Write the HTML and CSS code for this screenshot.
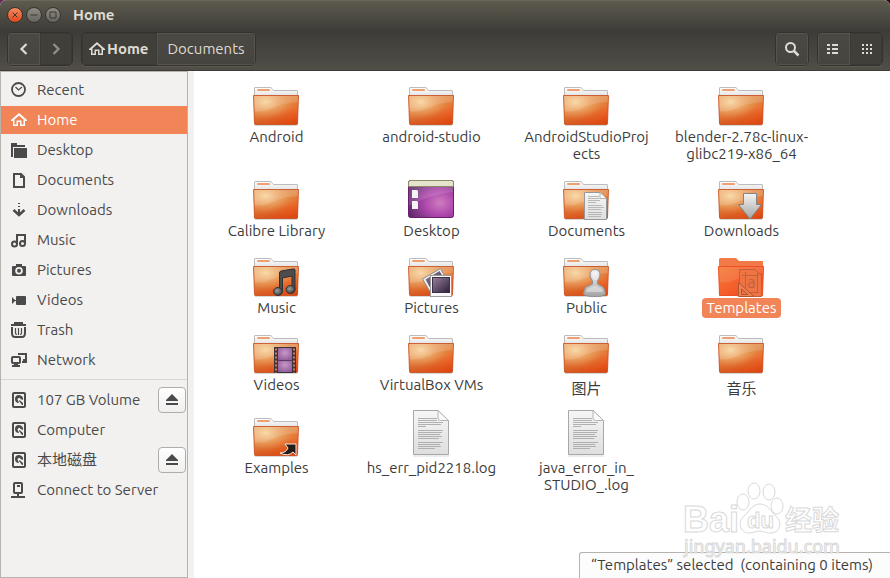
FILE: index.html
```html
<!DOCTYPE html>
<html lang="en">
<head>
    <meta charset="UTF-8">
    <meta name="viewport" content="width=device-width, initial-scale=1.0">
    <title>Home</title>
    <link rel="stylesheet" href="styles.css">
</head>
<body>
    <!-- shared gradients and icons -->
    <svg class="defs" width="0" height="0" aria-hidden="true">
        <defs>
            <linearGradient id="folder-base" x1="0" y1="0" x2="1" y2="1">
                <stop offset="0" stop-color="#e8a468"/>
                <stop offset="0.5" stop-color="#e28a46"/>
                <stop offset="0.85" stop-color="#f05a20"/>
                <stop offset="1" stop-color="#e04c1a"/>
            </linearGradient>
            <radialGradient id="folder-glow" cx="0.27" cy="0.22" r="0.6">
                <stop offset="0" stop-color="#f8d8a0" stop-opacity="0.95"/>
                <stop offset="1" stop-color="#f0a060" stop-opacity="0"/>
            </radialGradient>
            <linearGradient id="folder-shade" x1="0" y1="0" x2="0" y2="1">
                <stop offset="0.4" stop-color="#d84c14" stop-opacity="0"/>
                <stop offset="1" stop-color="#d4440e" stop-opacity="0.7"/>
            </linearGradient>
            <linearGradient id="tab" x1="0" y1="0" x2="0" y2="1">
                <stop offset="0" stop-color="#ffffff"/>
                <stop offset="1" stop-color="#dcdcdc"/>
            </linearGradient>
            <linearGradient id="paper" x1="0" y1="0" x2="0" y2="1">
                <stop offset="0" stop-color="#f6f6f6"/>
                <stop offset="1" stop-color="#dedede"/>
            </linearGradient>
            <linearGradient id="metal" x1="0" y1="0" x2="0" y2="1">
                <stop offset="0" stop-color="#f4f4f4"/>
                <stop offset="1" stop-color="#a4a4a4"/>
            </linearGradient>
            <radialGradient id="purple" cx="0.7" cy="0.6" r="0.75">
                <stop offset="0" stop-color="#d07cc0"/>
                <stop offset="0.45" stop-color="#ae48ac"/>
                <stop offset="1" stop-color="#5c2868"/>
            </radialGradient>
            <linearGradient id="photo" x1="0" y1="0" x2="1" y2="1">
                <stop offset="0" stop-color="#9a809c"/>
                <stop offset="1" stop-color="#2c2038"/>
            </linearGradient>
            <radialGradient id="film" cx="0.5" cy="0.4" r="0.8">
                <stop offset="0" stop-color="#c898c8"/>
                <stop offset="1" stop-color="#845090"/>
            </radialGradient>
            <radialGradient id="note" cx="0.4" cy="0.4" r="0.6">
                <stop offset="0" stop-color="#a0a0a0"/>
                <stop offset="1" stop-color="#3c3c3c"/>
            </radialGradient>
            <linearGradient id="selected" x1="0" y1="0" x2="1" y2="1">
                <stop offset="0" stop-color="#f47a38"/>
                <stop offset="0.5" stop-color="#f4602c"/>
                <stop offset="1" stop-color="#f03c14"/>
            </linearGradient>
        </defs>

        <symbol id="folder" viewBox="0 0 49 48">
            <path d="M3 47.500H45" stroke="#000" stroke-opacity="0.15"/>
            <path d="M2.500 20V10Q2.500 9.500 3 9.500H18Q19 9.500 20 10.500L21.500 12.500H45Q45.500 12.500 45.500 13V20Z" fill="url(#tab)" stroke="#bcbcbc"/>
            <rect x="5" y="11" width="13" height="2" rx="1" fill="#f0a070"/>
            <path d="M1.500 17.500H46.500L45.500 45.500Q45.500 46.500 44.500 46.500H3.500Q2.500 46.500 2.500 45.500Z" fill="url(#folder-base)"/>
            <path d="M1.500 17.500H46.500L45.500 46.500H2.500Z" fill="url(#folder-shade)"/>
            <path d="M1.500 17.500H46.500L45.500 46.500H2.500Z" fill="url(#folder-glow)"/>
            <path d="M2 18H46V24Q30 25 20 30T2.500 33Z" fill="#fff" fill-opacity="0.14"/>
            <path d="M1.500 17.500H46.500L45.500 45.500Q45.500 46.500 44.500 46.500H3.500Q2.500 46.500 2.500 45.500Z" fill="none" stroke="#c44a1c" stroke-opacity="0.8"/>
        </symbol>
        <symbol id="text-file" viewBox="0 0 49 48">
            <path d="M6 47H42" stroke="#000" stroke-opacity="0.15"/>
            <path d="M6.500 1.500H31L41.500 11.500V45.500H6.500Z" fill="url(#paper)" stroke="#a8a8a8"/>
            <path d="M31 1.500V9Q31 11.500 33.500 11.500H41.500Z" fill="#fafafa" stroke="#b4b4b4"/>
            <path d="M11 9.500H30M11 11.500H30M11 13.500H36M11 15.500H34M11 17.500H19M11 21.500H36M11 23.500H35M11 25.500H33M11 27.500H35M11 29.500H32M11 33.500H36M11 35.500H33M11 37.500H34M11 39.500H28" stroke="#b0b0b0"/>
        </symbol>
        <symbol id="house" viewBox="0 0 16 16">
            <path d="M8 1L0 8V9H2V14H7V10H9V14H14V9H16V8ZM8 3.500L12.500 7.500V12.500H10.500V8.500H5.500V12.500H3.500V7.500Z" fill="currentColor" fill-rule="evenodd"/>
        </symbol>
        <symbol id="disk" viewBox="0 0 16 16">
            <rect x="2" y="1" width="12" height="14" rx="1" fill="none" stroke="currentColor" stroke-width="2"/>
            <path d="M8 3A4 4 0 1 0 8 11L7 8.500A1.500 1.500 0 1 1 9.500 7L12 8A4 4 0 0 0 8 3ZM8.500 8L12 11V13H11L8 9Z" fill="currentColor"/>
        </symbol>
        <symbol id="eject" viewBox="0 0 12 12">
            <path d="M6 0L12 6V7H0V6ZM0 9H12V11H0Z" fill="currentColor"/>
        </symbol>
    </svg>

    <div class="window">
        <header class="header">
            <div class="titlebar">
                <button class="control close" aria-label="Close"><svg viewBox="0 0 14 14"><path d="M4.500 4.500L9.500 9.500M9.500 4.500L4.500 9.500"/></svg></button>
                <button class="control" aria-label="Minimize"><svg viewBox="0 0 14 14"><path d="M3.500 7H10.500"/></svg></button>
                <button class="control" aria-label="Maximize"><svg viewBox="0 0 14 14"><path d="M4 4H10V10H4Z"/></svg></button>
                <h1 class="title">Home</h1>
            </div>
            <div class="toolbar">
                <div class="group">
                    <button class="tool" aria-label="Back"><svg class="icon" viewBox="0 0 16 16"><path d="M10.500 3L5.500 8L10.500 13" fill="none" stroke="currentColor" stroke-width="2.200"/></svg></button>
                    <button class="tool pressed dim" aria-label="Forward"><svg class="icon" viewBox="0 0 16 16"><path d="M5.500 3L10.500 8L5.500 13" fill="none" stroke="currentColor" stroke-width="2.200"/></svg></button>
                </div>
                <nav class="group path">
                    <button class="tool pressed current"><svg class="icon"><use href="#house"/></svg>Home</button>
                    <button class="tool">Documents</button>
                </nav>
                <div class="group search">
                    <button class="tool" aria-label="Search"><svg class="icon" viewBox="0 0 16 16"><circle cx="6.500" cy="6.500" r="4.500" fill="none" stroke="currentColor" stroke-width="2"/><path d="M10 10L14.500 14.500" stroke="currentColor" stroke-width="2.500"/></svg></button>
                </div>
                <div class="group">
                    <button class="tool" aria-label="List view"><svg class="icon" viewBox="0 0 16 16"><path d="M1 3H4V5H1ZM6 3H12V5H6ZM1 7H4V9H1ZM6 7H12V9H6ZM1 11H4V13H1ZM6 11H12V13H6Z" fill="currentColor"/></svg></button>
                    <button class="tool pressed" aria-label="Icon view"><svg class="icon" viewBox="0 0 16 16"><path d="M4 3H6V5H4ZM8 3H10V5H8ZM12 3H14V5H12ZM4 7H6V9H4ZM8 7H10V9H8ZM12 7H14V9H12ZM4 11H6V13H4ZM8 11H10V13H8ZM12 11H14V13H12Z" fill="currentColor"/></svg></button>
                </div>
            </div>
        </header>

        <div class="body">
            <nav class="sidebar">
                <ul class="places">
                    <li><a class="place" href="#recent"><svg class="icon" viewBox="0 0 16 16"><circle cx="7.500" cy="7.500" r="6.500" fill="none" stroke="currentColor" stroke-width="1.800"/><path d="M4.500 5L7.500 8L11 5" fill="none" stroke="currentColor" stroke-width="1.200"/></svg>Recent</a></li>
                    <li><a class="place active" href="#home"><svg class="icon"><use href="#house"/></svg>Home</a></li>
                    <li><a class="place" href="#desktop"><svg class="icon" viewBox="0 0 16 16"><path d="M0 1H6V3H14V5H2V15H0ZM3 6H16V16H3Z" fill="currentColor"/></svg>Desktop</a></li>
                    <li><a class="place" href="#documents"><svg class="icon" viewBox="0 0 16 16"><path d="M3 2H10L13 5V15H3Z" fill="none" stroke="currentColor" stroke-width="2"/><path d="M9 2V6H13Z" fill="currentColor"/></svg>Documents</a></li>
                    <li><a class="place" href="#downloads"><svg class="icon" viewBox="0 0 16 16"><path d="M7 1H9V2H7ZM7 4H9V5H7ZM7 7H9V11H7Z" fill="currentColor"/><path d="M2.500 8L8 13L13.500 8" fill="none" stroke="currentColor" stroke-width="2.500"/></svg>Downloads</a></li>
                    <li><a class="place" href="#music"><svg class="icon" viewBox="0 0 16 16"><path d="M6 12V3H14V11" fill="none" stroke="currentColor" stroke-width="2"/><circle cx="3.500" cy="12" r="2.500" fill="none" stroke="currentColor" stroke-width="2"/><circle cx="11.500" cy="11.500" r="2.500" fill="none" stroke="currentColor" stroke-width="2"/></svg>Music</a></li>
                    <li><a class="place" href="#pictures"><svg class="icon" viewBox="0 0 16 16"><path d="M5 2H11V4H14Q15 4 15 5V13Q15 14 14 14H2Q1 14 1 13V5Q1 4 2 4H5ZM8 5A3.800 3.800 0 1 0 8 12.600A3.800 3.800 0 1 0 8 5Z" fill="currentColor" fill-rule="evenodd"/><circle cx="8" cy="8.800" r="2" fill="currentColor"/></svg>Pictures</a></li>
                    <li><a class="place" href="#videos"><svg class="icon" viewBox="0 0 16 16"><path d="M1 5L4 8V9L1 12ZM6 4H14Q15 4 15 5V12Q15 13 14 13H6Q5 13 5 12V9H4V8H5V5Q5 4 6 4Z" fill="currentColor"/></svg>Videos</a></li>
                    <li><a class="place" href="#trash"><svg class="icon" viewBox="0 0 16 16"><path d="M0 3H15M4 3V1H11V3M1 5V11Q1 15 4 15H11Q14 15 14 11V5" fill="none" stroke="currentColor" stroke-width="2"/><path d="M4.500 6V11L5.500 13M7.500 6V13M10.500 6V11L9.500 13" fill="none" stroke="currentColor" stroke-width="1.200"/></svg>Trash</a></li>
                    <li><a class="place" href="#network"><svg class="icon" viewBox="0 0 16 16"><path d="M7 2H15V8H12" fill="none" stroke="currentColor" stroke-width="2"/><path d="M11 9H16V11H11Z" fill="currentColor"/><rect x="1" y="5" width="8" height="6" rx="1" fill="none" stroke="currentColor" stroke-width="2"/><path d="M3 12H7V13H9V15H1V13H3Z" fill="currentColor"/></svg>Network</a></li>
                </ul>
                <ul class="places devices">
                    <li><a class="place" href="#volume"><svg class="icon"><use href="#disk"/></svg>107 GB Volume</a><button class="eject" aria-label="Eject 107 GB Volume"><svg><use href="#eject"/></svg></button></li>
                    <li><a class="place" href="#computer"><svg class="icon"><use href="#disk"/></svg>Computer</a></li>
                    <li><a class="place" href="#local"><svg class="icon"><use href="#disk"/></svg>本地磁盘</a><button class="eject" aria-label="Eject 本地磁盘"><svg><use href="#eject"/></svg></button></li>
                    <li><a class="place" href="#server"><svg class="icon" viewBox="0 0 16 16"><rect x="3" y="1" width="8" height="10" rx="1" fill="none" stroke="currentColor" stroke-width="2"/><path d="M6 4H9M0 15H14M7 11V15" stroke="currentColor" stroke-width="2"/></svg>Connect to Server</a></li>
                </ul>
            </nav>

            <main class="content">
                <ul class="files">
                    <li><a class="file" href="#"><svg class="thumb"><use href="#folder"/></svg><span class="name">Android</span></a></li>
                    <li><a class="file" href="#"><svg class="thumb"><use href="#folder"/></svg><span class="name">android-studio</span></a></li>
                    <li><a class="file" href="#"><svg class="thumb"><use href="#folder"/></svg><span class="name">AndroidStudioProj<br>ects</span></a></li>
                    <li><a class="file" href="#"><svg class="thumb"><use href="#folder"/></svg><span class="name">blender-2.78c-linux-<br>glibc219-x86_64</span></a></li>

                    <li><a class="file" href="#"><svg class="thumb"><use href="#folder"/></svg><span class="name">Calibre Library</span></a></li>
                    <li><a class="file" href="#">
                        <svg class="thumb" viewBox="0 0 49 48">
                            <rect x="1.500" y="8.500" width="45" height="37" rx="2" fill="url(#purple)" stroke="#6c1c6c"/>
                            <path d="M2 15H46V20Q24 22 2 34Z" fill="#fff" fill-opacity="0.13"/>
                            <path d="M1.500 14.500V10.500Q1.500 8.500 3.500 8.500H44.500Q46.500 8.500 46.500 10.500V14.500Z" fill="#e4e4cc" stroke="#8c8868"/>
                            <path d="M5 18H10L11 19V26H5ZM5 29H10L11 30V37H5Z" fill="#f4f4f4"/>
                        </svg>
                        <span class="name">Desktop</span></a></li>
                    <li><a class="file" href="#">
                        <svg class="thumb" viewBox="0 0 49 48">
                            <use href="#folder"/>
                            <path d="M22.500 20.500H38L44.500 27V47.500H22.500Z" fill="url(#paper)" stroke="#989898"/>
                            <path d="M38 20.500V26.500H44.500Z" fill="#fff" stroke="#b0b0b0"/>
                            <path d="M26 24.500H37M26 26.500H37M26 28.500H38M26 30.500H34M26 33.500H40M26 35.500H42M26 37.500H39M26 40.500H40M26 42.500H40M26 44.500H39" stroke="#b8b8b8"/>
                        </svg>
                        <span class="name">Documents</span></a></li>
                    <li><a class="file" href="#">
                        <svg class="thumb" viewBox="0 0 49 48">
                            <use href="#folder"/>
                            <path d="M26.500 21.500H39.500V32.500H44.500L33 47L21.500 32.500H26.500Z" fill="url(#metal)" stroke="#848484"/>
                        </svg>
                        <span class="name">Downloads</span></a></li>

                    <li><a class="file" href="#">
                        <svg class="thumb" viewBox="0 0 49 48">
                            <use href="#folder"/>
                            <path d="M27.500 42V24Q27.500 22.500 29 22L41 20Q43 19.500 43 21V41H40V27L30.500 29V42Z" fill="#4c4c4c" stroke="#303030"/>
                            <ellipse cx="26" cy="42.500" rx="4.500" ry="4" fill="url(#note)" stroke="#343434"/>
                            <ellipse cx="38.500" cy="40.500" rx="4.500" ry="4" fill="url(#note)" stroke="#343434"/>
                        </svg>
                        <span class="name">Music</span></a></li>
                    <li><a class="file" href="#">
                        <svg class="thumb" viewBox="0 0 49 48">
                            <use href="#folder"/>
                            <path d="M15.500 30L33.500 19.500L42 35L25 46Z" fill="#f0f0f0" stroke="#8c8c8c"/>
                            <path d="M18.500 30.500L32.500 22L39 33L25 42Z" fill="url(#photo)"/>
                            <rect x="23.500" y="26.500" width="21" height="21" fill="#f8f8f8" stroke="#9c9c9c"/>
                            <rect x="25.500" y="28.500" width="17" height="15" fill="url(#photo)" stroke="#3c3048"/>
                        </svg>
                        <span class="name">Pictures</span></a></li>
                    <li><a class="file" href="#">
                        <svg class="thumb" viewBox="0 0 49 48">
                            <use href="#folder"/>
                            <path d="M33 20.500Q28 20.500 28 26Q28 29 30.500 32V35L24 38Q22 39.500 21.500 45.500Q26 48 33 47.500Q40 48 43.500 45.500Q43 39.500 41 38L35.500 35V32Q38 29 38 26Q38 20.500 33 20.500Z" fill="url(#metal)" stroke="#909090"/>
                            <path d="M33 22.500Q30 22.500 30 26Q30 28 32 31H34Q36 28 36 26Q36 22.500 33 22.500ZM25 40L32 37H34L40 40L41 43H24Z" fill="#fff" fill-opacity="0.4"/>
                        </svg>
                        <span class="name">Public</span></a></li>
                    <li><a class="file selected" href="#">
                        <svg class="thumb" viewBox="0 0 49 48">
                            <path d="M2 18V10L3 9H19L22 12H46V18Z" fill="#f27a48"/>
                            <path d="M1.500 17.500H46.500L45.500 46.500H2.500Z" fill="url(#selected)" stroke="#ec5024"/>
                            <path d="M2 18H46V24Q30 25 20 30T2.500 33Z" fill="#fff" fill-opacity="0.1"/>
                            <path d="M22.500 20.500H38L44.500 27V47.500H22.500Z" fill="#ee7444" stroke="#c0603c"/>
                            <path d="M25 26.500H42M28.500 23V42M40.500 24V44M30 43.500H42" fill="none" stroke="#c4603c"/>
                            <path d="M21.500 33.500V47.500H37ZM24.500 40V45.500H31Z" fill="#f08050" fill-rule="evenodd" stroke="#b45434"/>
                            <text class="glyph" x="30" y="39">a</text>
                        </svg>
                        <span class="name">Templates</span></a></li>

                    <li><a class="file" href="#">
                        <svg class="thumb" viewBox="0 0 49 48">
                            <use href="#folder"/>
                            <rect x="22" y="21" width="22" height="26" fill="#3c3436"/>
                            <rect x="26" y="22" width="14" height="12" fill="url(#film)"/>
                            <rect x="26" y="34" width="14" height="12" fill="url(#film)"/>
                            <path d="M26 34.500H40" stroke="#5c3c64"/>
                            <path d="M24 22.500V47M42 22.500V47" stroke="#d8785c" stroke-width="2" stroke-dasharray="2 2"/>
                        </svg>
                        <span class="name">Videos</span></a></li>
                    <li><a class="file" href="#"><svg class="thumb"><use href="#folder"/></svg><span class="name">VirtualBox VMs</span></a></li>
                    <li><a class="file" href="#"><svg class="thumb"><use href="#folder"/></svg><span class="name cjk">图片</span></a></li>
                    <li><a class="file" href="#"><svg class="thumb"><use href="#folder"/></svg><span class="name cjk">音乐</span></a></li>

                    <li><a class="file" href="#">
                        <svg class="thumb" viewBox="0 0 49 48">
                            <use href="#folder"/>
                            <path d="M33 35H44V46L41 43Q36 48 28 44Q34 44 36 39Z" fill="#241c18" stroke="#f8e8e0"/>
                        </svg>
                        <span class="name">Examples</span></a></li>
                    <li><a class="file" href="#"><svg class="thumb"><use href="#text-file"/></svg><span class="name">hs_err_pid2218.log</span></a></li>
                    <li><a class="file" href="#"><svg class="thumb"><use href="#text-file"/></svg><span class="name">java_error_in_<br>STUDIO_.log</span></a></li>
                </ul>

                <div class="status">“Templates” selected&nbsp; (containing 0 items)</div>

                <svg class="watermark" viewBox="0 0 164 80">
                    <text class="mark-latin" x="0" y="52">Bai</text>
                    <ellipse cx="60" cy="22" rx="6" ry="8"/>
                    <ellipse cx="71" cy="11" rx="6" ry="8"/>
                    <ellipse cx="86" cy="12" rx="6" ry="8"/>
                    <ellipse cx="94" cy="26" rx="6" ry="8"/>
                    <path d="M77 24C69 24 67 31 61 36C54 42 57 53 66 53C71 53 73 51 77 51C81 51 84 54 89 53C98 52 99 42 93 36C87 31 85 24 77 24Z"/>
                    <text class="mark-du" x="64" y="48">du</text>
                    <text class="mark-cjk" x="102" y="50">经验</text>
                    <text class="mark-url" x="1" y="73">jingyan.baidu.com</text>
                </svg>
            </main>
        </div>
    </div>
</body>
</html>
```

FILE: styles.css
```css
* {
    box-sizing: border-box;
}

body {
    margin: 0;
    background: linear-gradient(to right, #6a2858, #2c001e);
    font-family: Ubuntu, 'Noto Sans', 'Noto Sans CJK SC', sans-serif;
    font-size: 15px;
    line-height: 18px;
    color: #3c3c3c;
}

ul {
    list-style: none;
    margin: 0;
    padding: 0;
}

a {
    color: inherit;
    text-decoration: none;
}

button {
    font: inherit;
    padding: 0;
    border: none;
    cursor: pointer;
}

.defs {
    position: absolute;
}

.icon {
    display: block;
    flex: none;
    width: 16px;
    height: 16px;
}

.window {
    display: flex;
    flex-direction: column;
    height: 100vh;
    border-radius: 6px 6px 0 0;
    overflow: hidden;
    background-color: #f2f1f0;
}

/* Header */
.header {
    flex: none;
    color: #dfdbd2;
    border-bottom: 1px solid #3c3b37;
}

.titlebar {
    display: flex;
    align-items: center;
    gap: 3px;
    height: 29px;
    padding-left: 7px;
    background: linear-gradient(#5d5a4e, #3f3e39);
    border-top: 1px solid #6a675a;
}

.control {
    width: 16px;
    height: 16px;
    border-radius: 50%;
    border: 1px solid #35342f;
    background: linear-gradient(#8e8b82, #66645d);
}

.control svg {
    display: block;
    width: 14px;
    height: 14px;
    fill: none;
    stroke: #3a3934;
    stroke-width: 1;
}

.close {
    background: linear-gradient(#f68a62, #e2481a);
}

.title {
    margin: 0 0 0 9px;
    font-size: 15px;
    font-weight: bold;
}

.toolbar {
    display: flex;
    align-items: flex-start;
    gap: 8px;
    height: 41px;
    padding: 3px 7px;
    background: linear-gradient(#3c3b37, #504e47);
}

.group {
    display: flex;
    height: 34px;
    border: 1px solid #33322e;
    border-radius: 5px;
    overflow: hidden;
    box-shadow: 0 1px 0 #5b5951;
}

.tool {
    display: flex;
    align-items: center;
    justify-content: center;
    gap: 2px;
    min-width: 32px;
    color: #dfdbd2;
    background: linear-gradient(#4a4943, #45443e);
    box-shadow: inset 0 0 0 1px #56544c;
}

.pressed {
    background: #403f3a;
    box-shadow: inset 0 0 0 1px #3a3934;
}

.dim {
    color: #93908a;
}

.path .tool {
    padding: 0 10px;
}

.path .current {
    padding: 0 9px 0 7px;
    font-weight: bold;
}

.search {
    margin-left: auto;
}

/* Sidebar */
.body {
    display: flex;
    flex: 1;
    min-height: 0;
    gap: 6px;
}

.sidebar {
    flex: none;
    width: 188px;
    padding-top: 4px;
    border: 1px solid #b6b3ae;
    color: #4a4a4a;
}

.places {
    display: grid;
    gap: 2px;
}

.places li {
    display: flex;
    align-items: center;
    height: 28px;
}

.devices {
    margin-top: 5px;
    padding-top: 6px;
    border-top: 1px solid #d8d6d3;
}

.place {
    display: flex;
    align-items: center;
    flex: 1;
    gap: 10px;
    height: 28px;
    padding-left: 10px;
}

.active {
    background-color: #f28558;
    color: #fff;
}

.eject {
    display: flex;
    align-items: center;
    justify-content: center;
    width: 28px;
    height: 26px;
    margin-right: 1px;
    color: #4a4a4a;
    background: linear-gradient(#fff, #f0efee);
    border: 1px solid #b0ada8;
    border-radius: 4px;
}

.eject svg {
    width: 12px;
    height: 12px;
}

/* Files */
.content {
    position: relative;
    flex: 1;
    padding: 7px 0 0 5px;
    background-color: #fff;
}

.files {
    display: grid;
    grid-template-columns: repeat(auto-fill, 155px);
    row-gap: 8px;
}

.file {
    display: flex;
    flex-direction: column;
    align-items: center;
    text-align: center;
}

.thumb {
    display: block;
    width: 49px;
    height: 48px;
}

.glyph {
    font-size: 17px;
    fill: #c4603c;
}

.name {
    margin-top: 1px;
    padding: 1px 5px 2px;
    line-height: 17px;
    white-space: nowrap;
}

.cjk {
    padding: 2px 5px 1px;
    line-height: 23px;
}

.selected .name {
    border-radius: 4px;
    background-color: #f28558;
    color: #fff;
}

/* Floating status bar */
.status {
    position: absolute;
    right: 0;
    bottom: 0;
    height: 26px;
    padding: 0 17px 0 11px;
    line-height: 24px;
    background-color: #fcfcfc;
    border: 1px solid #b6b3ae;
    border-width: 1px 0 0 1px;
    border-top-left-radius: 3px;
}

.watermark {
    position: absolute;
    right: 43px;
    bottom: 18px;
    width: 164px;
    height: 80px;
    fill: #fff;
    stroke: #d9d9d9;
    stroke-width: 1;
    pointer-events: none;
}

.mark-latin {
    font: bold 36px 'Liberation Sans', sans-serif;
}

.mark-du {
    font: bold 22px 'Liberation Sans', sans-serif;
}

.mark-cjk {
    font: bold 27px 'Noto Sans CJK SC', sans-serif;
}

.mark-url {
    font: 18px 'Noto Sans', sans-serif;
}
```
